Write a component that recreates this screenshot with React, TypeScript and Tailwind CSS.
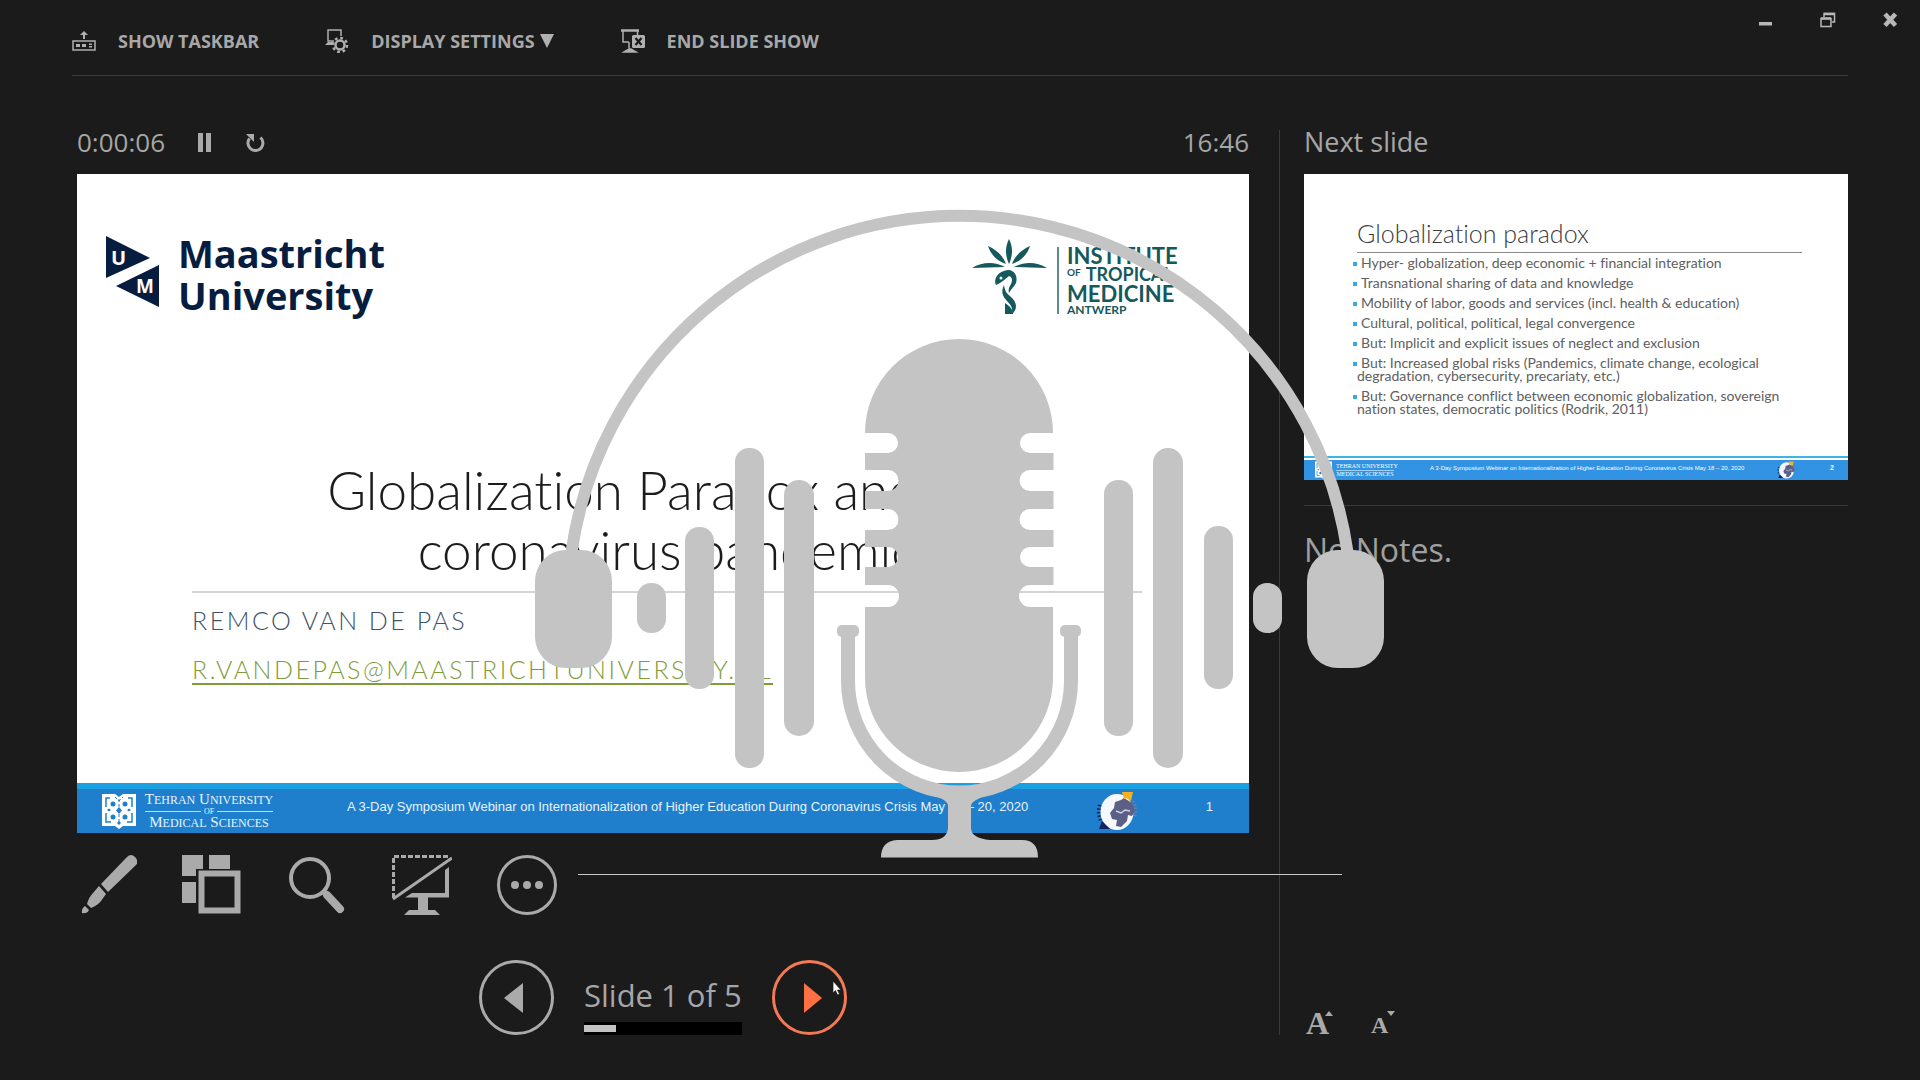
import type { ReactNode } from "react";

const EVENT_CAPTION =
  "A 3-Day Symposium Webinar on Internationalization of Higher Education During Coronavirus Crisis May 18 – 20, 2020";

const BULLETS = [
  "Hyper- globalization, deep economic + financial integration",
  "Transnational sharing of data and knowledge",
  "Mobility of labor, goods and services (incl. health & education)",
  "Cultural, political, political, legal convergence",
  "But: Implicit and explicit issues of neglect and exclusion",
  "But: Increased global risks (Pandemics, climate change, ecological degradation, cybersecurity, precariaty, etc.)",
  "But: Governance conflict between economic globalization, sovereign nation states, democratic politics (Rodrik, 2011)",
];

function TaskbarIcon() {
  return (
    <svg width="24" height="24" viewBox="0 0 24 24" fill="none" aria-hidden="true">
      <path d="M12 10V5" stroke="#b0b0b0" strokeWidth="2" />
      <path d="M8 6l4-4 4 4z" fill="#b0b0b0" />
      <rect x="1" y="12" width="22" height="9" stroke="#b0b0b0" strokeWidth="1.5" />
      <path d="M4 15h4v3H4zM10 15h4v3h-4zM17 14.500h3v1.500h-3zM17 17h3v1.500h-3z" fill="#b0b0b0" />
    </svg>
  );
}

function DisplayIcon() {
  return (
    <svg width="24" height="24" viewBox="0 0 24 24" fill="none" aria-hidden="true">
      <path d="M9 12H3V1h13v6" stroke="#b0b0b0" strokeWidth="1.500" />
      <path d="M1 15l2-2h5v3H0z" fill="#b0b0b0" />
      <circle cx="15" cy="16" r="4.500" stroke="#b0b0b0" strokeWidth="2.500" />
      <circle cx="15" cy="16" r="7" stroke="#b0b0b0" strokeWidth="2.500" strokeDasharray="2.750 2.750" />
    </svg>
  );
}

function EndShowIcon() {
  return (
    <svg width="24" height="24" viewBox="0 0 24 24" fill="none" aria-hidden="true">
      <path d="M0 1.500h18" stroke="#b0b0b0" strokeWidth="2.500" />
      <path d="M2 2v11h6M16.500 2v4" stroke="#b0b0b0" strokeWidth="1.500" />
      <path d="M8 13v8M3 23l5-3h2l5 3z" stroke="#b0b0b0" strokeWidth="1.500" fill="#b0b0b0" />
      <rect x="11" y="6" width="13" height="13" rx="1.500" fill="#b0b0b0" />
      <path d="M14.500 9l6 7M20.500 9l-6 7" stroke="#1b1b1b" strokeWidth="2.250" />
    </svg>
  );
}

function ToolbarButton({ icon, children }: { icon: ReactNode; children: ReactNode }) {
  return (
    <button type="button" className="flex items-center gap-[22px] text-[18px] leading-6 font-bold text-[#a8a8a8]">
      {icon}
      <span className="flex items-center gap-1 whitespace-nowrap">{children}</span>
    </button>
  );
}

function Header() {
  return (
    <header>
      <div className="flex h-[75px] justify-between pr-[22px] pl-[72px]">
        <div className="flex items-center gap-[66px] pt-[6px]">
          <ToolbarButton icon={<TaskbarIcon />}>SHOW TASKBAR</ToolbarButton>
          <ToolbarButton icon={<DisplayIcon />}>
            DISPLAY SETTINGS
            <svg width="16" height="14" viewBox="0 0 16 14" fill="#b0b0b0" aria-hidden="true">
              <path d="M1 0h14L8 14z" />
            </svg>
          </ToolbarButton>
          <ToolbarButton icon={<EndShowIcon />}>END SLIDE SHOW</ToolbarButton>
        </div>
        <div className="flex items-start gap-[46px] pt-3">
          <button type="button" aria-label="Minimize">
            <svg width="16" height="16" viewBox="0 0 16 16" aria-hidden="true">
              <path d="M1 10h13v3.500H1z" fill="#b8b8b8" />
            </svg>
          </button>
          <button type="button" aria-label="Restore">
            <svg width="16" height="16" viewBox="0 0 16 16" fill="none" stroke="#b8b8b8" aria-hidden="true">
              <path d="M4 5V1.500h10.500V10H12" strokeWidth="1.500" />
              <path d="M4 2h11" strokeWidth="2.500" />
              <rect x="1" y="6.500" width="10" height="8" strokeWidth="1.500" />
              <path d="M1 6.500h10" strokeWidth="2.500" />
            </svg>
          </button>
          <button type="button" aria-label="Close">
            <svg width="16" height="16" viewBox="0 0 16 16" stroke="#b8b8b8" strokeWidth="4.500" aria-hidden="true">
              <path d="M3 2l10.500 11.500M13.500 2L3 13.500" />
            </svg>
          </button>
        </div>
      </div>
      <hr className="mx-[72px] border-[#3c3c3c]" />
    </header>
  );
}

function MaastrichtLogo() {
  return (
    <div className="flex items-start gap-[18px] text-[#071d3f]">
      <svg className="mt-1" width="54" height="72" viewBox="0 0 54 72" aria-hidden="true">
        <path d="M0 0l44 22L0 42zM53 29v42L10 50z" fill="#071d3f" />
        <text x="5" y="29" fontSize="20" fontWeight="700" fill="#fff" fontFamily="Open Sans, sans-serif">U</text>
        <text x="30" y="57" fontSize="19" fontWeight="700" fill="#fff" fontFamily="Open Sans, sans-serif">M</text>
      </svg>
      <p className="text-[38px] leading-[42px] font-bold">
        Maastricht
        <br />
        University
      </p>
    </div>
  );
}

function TropicalLogo() {
  return (
    <div className="mt-[7px] flex items-start text-[#15595c]">
      <svg width="76" height="76" viewBox="0 0 76 76" fill="#15595c" aria-hidden="true">
        <path d="M37 0c4 8 4 16 0 25c-4-9-4-17 0-25z" />
        <path d="M16 7c9 4 15 10 18 18c-9-3-15-9-18-18z" />
        <path d="M58 7c-9 4-15 10-18 18c9-3 15-9 18-18z" />
        <path d="M0 29c10-6 22-7 33-1c-10 0-22 1-33 1z" />
        <path d="M75 29c-10-6-22-7-33-1c10 0 22 1 33 1z" />
        <path d="M24 46c-3-6 2-14 12-15c7 0 10 7 8 13c-2 4-5 6-7 10c-1-3 0-6 2-9c2-4 1-7-2-8c-4 3-8 7-13 9z" />
        <path d="M32 46c1 8 4 9 9 14c5 6 3 12-1 15c1-6-1-9-5-13c-5-5-6-10-3-16z" />
        <path d="M33 64c5 3 8 7 8 11h-8z" />
        <circle cx="29" cy="39" r="1.500" fill="#fff" />
      </svg>
      <div className="mt-2 ml-[9px] h-[67px] w-[2px] bg-[#5d8a86]" />
      <div className="mt-[7px] ml-2 flex w-[115px] flex-col font-[Lato,sans-serif] font-bold whitespace-nowrap">
        <span className="text-[22px] leading-[19px]">INSTITUTE</span>
        <span className="flex items-start gap-[5px] text-[18px] leading-[19px]">
          <span className="text-[10px] leading-[14px]">OF</span>
          TROPICAL
        </span>
        <span className="text-[22px] leading-5">MEDICINE</span>
        <span className="text-[12px] leading-[12px]">ANTWERP</span>
      </div>
    </div>
  );
}

function TehranEmblem({ className }: { className: string }) {
  return (
    <svg className={className} viewBox="0 0 34 36" aria-hidden="true">
      <path d="M0 1h13l4 3 4-3h13v32H21l-4 3-4-3H0z" fill="#fff" />
      <g fill="none" stroke="#1f7fcc" strokeWidth="1.500">
        <path d="M8 5H4v9M26 5h4v9M4 20v9h5M30 20v9h-5" />
        <path d="M17 6v25M13 4l4 4 4-4" strokeWidth="1" strokeDasharray="3 2" />
      </g>
      <g fill="#1f7fcc">
        <circle cx="11" cy="11" r="2.500" />
        <circle cx="23" cy="11" r="2.500" />
        <circle cx="11" cy="24" r="2.500" />
        <circle cx="23" cy="24" r="2.500" />
        <path d="M17 14l3 3.500-3 3.500-3-3.500zM5 17l2-1.500L9 17l-2 1.500zM25 17l2-1.500 2 1.500-2 1.500zM17 28l2 2-2 2-2-2z" />
      </g>
    </svg>
  );
}

function Globe({ className }: { className: string }) {
  return (
    <svg className={className} viewBox="0 0 42 40" aria-hidden="true">
      <path d="M4 14A19 19 0 0 0 6 31" fill="none" stroke="#12245f" strokeWidth="4" strokeDasharray="1.500 2" />
      <path d="M37 10A19 19 0 0 1 38 27" fill="none" stroke="#6d7fa0" strokeWidth="3" strokeDasharray="1.500 2" />
      <ellipse cx="21" cy="21" rx="16.500" ry="18" fill="#f4f7fb" />
      <path d="M19 11l6-2 3-2 8 5 3 8-3 5-4-1-1 6-6 6-5-1 1-6-5-1-2-6 4-5z" fill="#5c5f86" />
      <path d="M20 20l5 2 4-3 5 1" fill="none" stroke="#cdd5e4" strokeWidth="1.500" />
      <path d="M26 1l11 0-2 9-4-3-3 1z" fill="#f6b21b" />
      <path d="M3 38l3-8 8 8z" fill="#12245f" />
    </svg>
  );
}

function TehranLogo() {
  return (
    <div className="flex items-center gap-[9px] font-['Liberation_Serif',serif] text-[#e6f4ff]">
      <TehranEmblem className="h-9 w-[34px]" />
      <div className="flex w-[128px] flex-col items-center">
        <span className="text-[15px] leading-[13px] whitespace-nowrap">
          T<span className="text-[12px]">EHRAN</span> U<span className="text-[12px]">NIVERSITY</span>
        </span>
        <span className="flex w-full items-center gap-[3px] text-[8px] leading-[9px]">
          <span className="h-px flex-1 bg-[#bfe0fa]" />
          OF
          <span className="h-px flex-1 bg-[#bfe0fa]" />
        </span>
        <span className="text-[15px] leading-[13px] whitespace-nowrap">
          M<span className="text-[12px]">EDICAL</span> S<span className="text-[12px]">CIENCES</span>
        </span>
      </div>
    </div>
  );
}

function CurrentSlide() {
  return (
    <article className="flex aspect-video w-full flex-col overflow-hidden bg-white">
      <div className="flex items-start justify-between pt-[58px] pr-[67px] pl-[29px]">
        <MaastrichtLogo />
        <TropicalLogo />
      </div>
      <div className="mt-auto mb-[89px] pr-[107px] pl-[115px] font-[Lato,sans-serif] [font-variant-ligatures:none]">
        <h1 className="text-center text-[53px] leading-[60px] font-light text-[#1c1c1c]">
          Globalization Paradox and the
          <br />
          coronavirus pandemic
        </h1>
        <hr className="mt-[11px] mb-[3px] border-t-2 border-[#d4d4d4]" />
        <p className="text-[25px] leading-[49px] font-light tracking-widest text-[#3f5468]">REMCO VAN DE PAS</p>
        <p className="text-[25px] leading-[49px] font-light tracking-widest">
          <a href="mailto:r.vandepas@maastrichtuniversity.nl" className="text-[#7f9c3a] underline decoration-2 underline-offset-4">
            R.VANDEPAS@MAASTRICHTUNIVERSITY.NL
          </a>
        </p>
      </div>
      <footer className="flex h-[50px] items-center border-t-[6px] border-[#1a9fe0] bg-[#1f7fcc] pr-[36px] pl-[25px] text-[#e6f4ff]">
        <TehranLogo />
        <p className="ml-[74px] flex-1 pb-2 font-['Liberation_Sans',sans-serif] text-[13px] leading-5 whitespace-nowrap">
          {EVENT_CAPTION}
        </p>
        <Globe className="h-10 w-[42px]" />
        <span className="ml-[68px] pb-2 font-['Liberation_Sans',sans-serif] text-[13px] leading-5">1</span>
      </footer>
    </article>
  );
}

function NextSlide() {
  return (
    <article className="flex aspect-video w-full flex-col overflow-hidden bg-white font-[Lato,sans-serif] [font-variant-ligatures:none]">
      <div className="pt-[43px] pr-[46px] pl-[53px]">
        <h2 className="text-[25px] leading-8 font-light text-[#3c3c3c]">Globalization paradox</h2>
        <hr className="mt-[3px] border-[#8a8a8a]" />
        <ul className="mt-[3px] flex flex-col gap-[7px] text-[14px] leading-[13px] text-[#606060]">
          {BULLETS.map((bullet) => (
            <li key={bullet}>
              <span className="-ml-1 mr-1 inline-block size-1 bg-[#35abe0] align-middle" />
              {bullet}
            </li>
          ))}
        </ul>
      </div>
      <footer className="mt-auto border-t-2 border-[#3cb4e4] pt-[2px]">
        <div className="flex h-5 items-center bg-[#3292e4] pr-[14px] pl-[11px] text-white">
          <TehranEmblem className="h-[18px] w-[17px]" />
          <div className="ml-1 flex w-[58px] flex-col items-center font-['Liberation_Serif',serif] text-[6px] leading-[7px] whitespace-nowrap">
            <span className="w-full border-b border-[#9fd0f6] text-center">TEHRAN UNIVERSITY</span>
            <span>MEDICAL SCIENCES</span>
          </div>
          <p className="ml-[36px] flex-1 pb-1 font-['Liberation_Sans',sans-serif] text-[6px] leading-3 whitespace-nowrap">
            {EVENT_CAPTION}
          </p>
          <Globe className="h-[18px] w-[19px]" />
          <span className="ml-[34px] pb-1 font-['Liberation_Sans',sans-serif] text-[7px] leading-3 font-bold">2</span>
        </div>
      </footer>
    </article>
  );
}

function Tools() {
  return (
    <div className="mt-[22px] flex gap-[45px]">
      <button type="button" aria-label="Pen and laser pointer tools">
        <svg width="60" height="60" viewBox="0 0 60 60" fill="#aaa" aria-hidden="true">
          <path d="M50 2q4-4 8 0q4 4 1 8L31 37l-7-8z" />
          <path d="M22 31l7 8-5 7q-3 4-10 7l-4-4q2-7 6-11z" />
          <path d="M8 51l4 4q-2 4-7 3q-1-4 3-7z" />
        </svg>
      </button>
      <button type="button" aria-label="See all slides">
        <svg width="60" height="60" viewBox="0 0 60 60" fill="#aaa" aria-hidden="true">
          <path d="M0 0h21v14h-7v7H0zM27 0h21v14H27zM0 27h14v21H0z" />
          <rect x="19.500" y="18.500" width="36" height="37" fill="none" stroke="#aaa" strokeWidth="6" />
        </svg>
      </button>
      <button type="button" aria-label="Zoom into the slide">
        <svg width="60" height="60" viewBox="0 0 60 60" fill="none" stroke="#aaa" aria-hidden="true">
          <circle cx="23" cy="23" r="19" strokeWidth="4" />
          <path d="M37 37l3 3" strokeWidth="6" />
          <path d="M40 40l13 14" strokeWidth="8" strokeLinecap="round" />
        </svg>
      </button>
      <button type="button" aria-label="Black or unblack slide show">
        <svg width="60" height="60" viewBox="0 0 60 60" fill="none" stroke="#aaa" aria-hidden="true">
          <path d="M1.500 43V1.500H56" strokeWidth="3" strokeDasharray="5 2" />
          <path d="M1 44L60 3" strokeWidth="3" />
          <path d="M13 42.500L20 38H53V15l4-3v30.500z" fill="#aaa" stroke="none" />
          <path d="M26 42h10v13H26zM17 55h26l5 5H12z" fill="#aaa" stroke="none" />
        </svg>
      </button>
      <button type="button" aria-label="More slide show options">
        <svg width="60" height="60" viewBox="0 0 60 60" fill="#aaa" aria-hidden="true">
          <circle cx="30" cy="30" r="28.500" fill="none" stroke="#aaa" strokeWidth="3" />
          <circle cx="18" cy="30" r="4" />
          <circle cx="30" cy="30" r="4" />
          <circle cx="42" cy="30" r="4" />
        </svg>
      </button>
    </div>
  );
}

function SlideNavigation() {
  return (
    <nav className="mt-[45px] flex justify-center gap-[30px]">
      <button type="button" aria-label="Previous slide">
        <svg width="75" height="75" viewBox="0 0 75 75" aria-hidden="true">
          <circle cx="37.500" cy="37.500" r="36" fill="none" stroke="#aaa" strokeWidth="3" />
          <path d="M44 23v30L25 38z" fill="#aaa" />
        </svg>
      </button>
      <div className="flex w-[158px] flex-col">
        <p className="mt-[14px] text-[31px] leading-[42px] whitespace-nowrap text-[#a6a6a6]">Slide 1 of 5</p>
        <div className="mt-[6px] h-[13px] bg-black py-[3px]">
          <div className="h-[7px] w-1/5 bg-[#c3c3c3]" />
        </div>
      </div>
      <button type="button" aria-label="Next slide" className="relative">
        <svg width="75" height="75" viewBox="0 0 75 75" aria-hidden="true">
          <circle cx="37.500" cy="37.500" r="36" fill="none" stroke="#f47a55" strokeWidth="3" />
          <path d="M32 23v30l18-15z" fill="#ff7043" />
        </svg>
        <svg className="absolute top-5 left-[60px]" width="10" height="16" viewBox="0 0 10 16" aria-hidden="true">
          <path d="M1 1v12l2.500-2.500L5.500 15l2-1-2-4H9z" fill="#fff" stroke="#222" strokeWidth="0.750" />
        </svg>
      </button>
    </nav>
  );
}

function PodcastOverlay() {
  return (
    <svg
      className="pointer-events-none absolute top-[200px] left-1/2 -translate-x-1/2"
      width="860"
      height="690"
      viewBox="530 200 860 690"
      fill="#c4c4c4"
      aria-hidden="true"
    >
      <path d="M571.500 552A392 392 0 0 1 1347.500 552" fill="none" stroke="#c4c4c4" strokeWidth="12" />
      <rect x="535" y="550" width="77" height="118" rx="31" />
      <rect x="1307" y="550" width="77" height="118" rx="31" />
      <rect x="637" y="583" width="29" height="50" rx="14" />
      <rect x="685" y="527" width="29" height="162" rx="14" />
      <rect x="735" y="448" width="29" height="320" rx="14" />
      <rect x="784" y="480" width="30" height="256" rx="15" />
      <rect x="1104" y="480" width="29" height="256" rx="14" />
      <rect x="1153" y="448" width="30" height="320" rx="15" />
      <rect x="1204" y="526" width="29" height="163" rx="14" />
      <rect x="1253" y="583" width="29" height="50" rx="14" />
      <path d="M865 433A94 94 0 0 1 1053 433H1030a10 10 0 0 0 0 20h23.500v17H1030a10 10 0 0 0 0 21h23.500v18H1030a10 10 0 0 0 0 21h23.500v17H1030a10 10 0 0 0 0 20h23.500v18H1030a10 10 0 0 0 0 22h23v71A94 94 0 0 1 865 678V607H888a10 10 0 0 0 0-22H865v-18h23a10 10 0 0 0 0-20H865v-17h23a10 10 0 0 0 0-21H865v-18h23a10 10 0 0 0 0-21H865v-17h23a10 10 0 0 0 0-20H865z" />
      <path d="M848 632V681A111.500 111.500 0 0 0 1071 681V632" fill="none" stroke="#c4c4c4" strokeWidth="14" />
      <rect x="837" y="625" width="22" height="12" rx="5" />
      <rect x="1060" y="625" width="21" height="12" rx="5" />
      <path d="M930 795Q948 799 948 806V828Q947 840 932 840H897Q881 841 881 857.500H1038Q1038 840 1022 840H990Q971 838 971 828V806Q971 800 989 795z" />
      <path d="M578 874.500h764" stroke="#c8c8c8" strokeWidth="1" />
    </svg>
  );
}

export default function App() {
  return (
    <div className="relative min-h-screen bg-[#1b1b1b] pb-11 font-['Open_Sans',sans-serif]">
      <Header />
      <main className="mt-[54px] grid grid-cols-[1202fr_569fr] pr-[72px] pl-[77px]">
        <section className="flex flex-col pr-[30px]">
          <div className="flex h-11 items-start justify-between text-[26px] leading-6 text-[#a6a6a6]">
            <div className="flex items-start">
              <time>0:00:06</time>
              <button type="button" aria-label="Pause timer" className="mt-[3px] ml-8">
                <svg width="16" height="19" viewBox="0 0 16 19" fill="#aaa" aria-hidden="true">
                  <path d="M1 0h5v19H1zM9 0h5v19H9z" />
                </svg>
              </button>
              <button type="button" aria-label="Restart timer" className="mt-[3px] ml-8">
                <svg width="20" height="20" viewBox="0 0 20 20" fill="none" aria-hidden="true">
                  <path d="M15.500 4.500A7.500 7.500 0 1 1 4.500 5.500" stroke="#aaa" strokeWidth="3" />
                  <path d="M1 1h8v8z" fill="#aaa" />
                </svg>
              </button>
            </div>
            <time>16:46</time>
          </div>
          <CurrentSlide />
          <Tools />
          <SlideNavigation />
        </section>
        <aside className="flex flex-col border-l border-[#3a3a3a] pl-6">
          <h2 className="h-11 text-[27px] leading-6 text-[#a6a6a6]">Next slide</h2>
          <NextSlide />
          <hr className="mt-[25px] border-[#3a3a3a]" />
          <p className="mt-6 text-[32px] leading-10 text-[#a0a0a0]">No Notes.</p>
          <div className="mt-auto flex items-end gap-[38px] pl-[2px] font-['Liberation_Serif',serif] font-bold text-[#aaa]">
            <button type="button" aria-label="Make text larger" className="flex items-start">
              <span className="text-[32px] leading-6">A</span>
              <svg className="-ml-1" width="8" height="5" viewBox="0 0 8 5" fill="#aaa" aria-hidden="true">
                <path d="M0 5l4-5 4 5z" />
              </svg>
            </button>
            <button type="button" aria-label="Make text smaller" className="flex items-start">
              <span className="pt-[5px] text-[24px] leading-[19px]">A</span>
              <svg className="-ml-px" width="8" height="5" viewBox="0 0 8 5" fill="#aaa" aria-hidden="true">
                <path d="M0 0h8L4 5z" />
              </svg>
            </button>
          </div>
        </aside>
      </main>
      <PodcastOverlay />
    </div>
  );
}
